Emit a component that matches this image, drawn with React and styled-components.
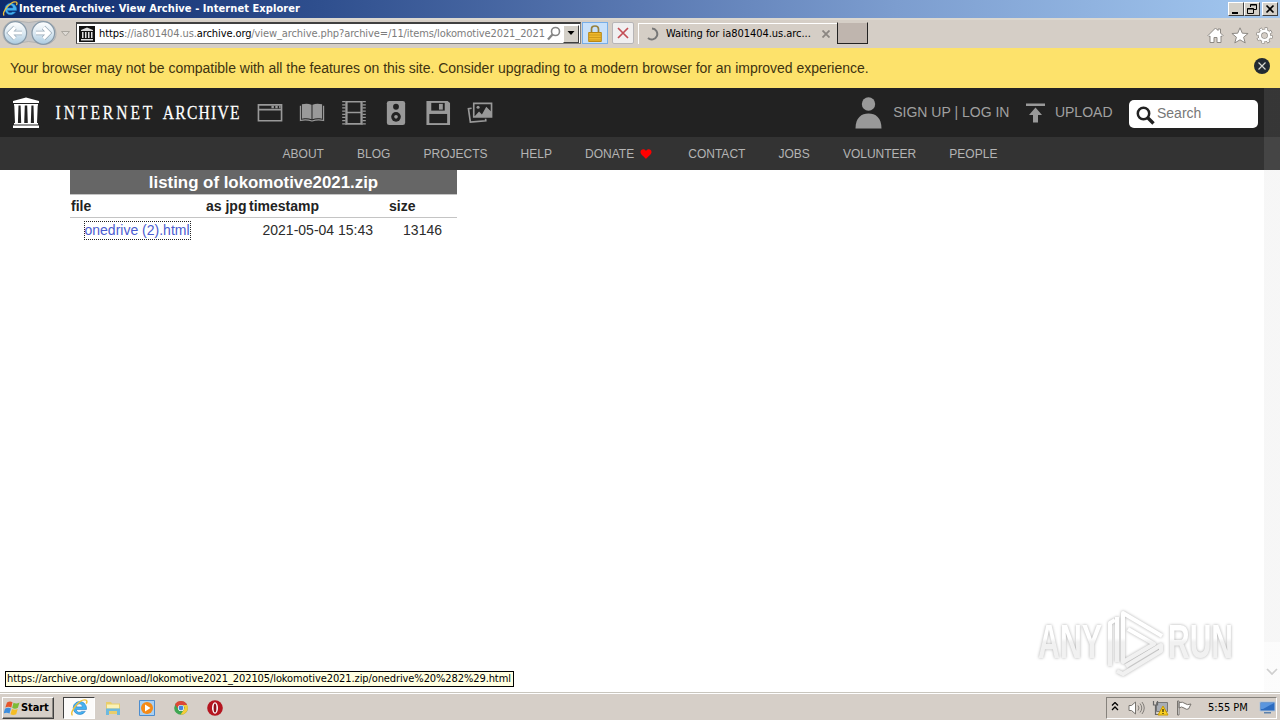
import React from "react";
import styled, { createGlobalStyle } from "styled-components";

const Global = createGlobalStyle`
  * { box-sizing: border-box; }
  body { margin: 0; background: #fff; overflow: hidden; }
  svg { display: block; flex: none; }
`;

const ui = `"DejaVu Sans Condensed", "DejaVu Sans", sans-serif`;

const Screen = styled.div`
  width: 1280px; height: 720px; position: relative; overflow: hidden;
  display: flex; flex-direction: column;
  font-family: "Liberation Sans", Arial, sans-serif; font-size: 14px; color: #2c2c2c;
`;
const TitleBar = styled.header`
  height: 18px; flex: none; display: flex; align-items: center; padding: 0 2px;
  background: linear-gradient(90deg, #0d2a6c 0%, #2f4f8e 25%, #5a79b2 50%, #7c9dcf 70%, #a3c8f0 100%);
`;
const WindowTitle = styled.span`
  flex: 1; margin-left: 1px; white-space: nowrap; color: #fff;
  font: bold 11px/18px ${ui}; letter-spacing: ${(p) => p.$track};
`;
const Caption = styled.button`
  width: 16px; height: 14px; padding: 0; margin: 0 0 0 ${(p) => p.$gap || 0}px;
  display: flex; align-items: center; justify-content: center;
  background: #d4d0c8; border: 1px solid; border-color: #fff #404040 #404040 #fff;
`;
const Toolbar = styled.div`
  height: 30px; flex: none; display: flex; align-items: flex-start;
  background: #d5cec6; border-top: 2px solid #dcd8d0; padding-left: 2px;
`;
const AddressBar = styled.div`
  width: 505px; height: 22px; margin: 2px 0 0; padding: 0 1px 0 2px;
  display: flex; align-items: center; background: #fff;
  border: 1px solid #808080; border-top: 2px solid #404040; border-left-color: #404040;
`;
const Url = styled.span`
  flex: 1; margin-left: 4px; white-space: nowrap; color: #7c7c7c;
  font: 11px/18px ${ui}; letter-spacing: ${(p) => p.$track};
  b { font-weight: normal; color: #000; }
`;
const DropButton = styled.div`
  width: 16px; height: 18px; display: flex; align-items: center; justify-content: center;
  background: #d4d0c8; border: 1px solid; border-color: #fff #404040 #404040 #fff; margin-left: 2px;
`;
const ToolButton = styled.div`
  width: ${(p) => p.$w}px; height: 22px; margin: 2px 0 0 ${(p) => p.$gap}px;
  display: flex; align-items: center; justify-content: center;
  background: ${(p) => p.$bg}; border: 1px solid ${(p) => p.$line}; border-radius: ${(p) => p.$r || 0}px;
`;
const Tab = styled.div`
  width: 199px; height: 21px; margin: 3px 0 0 4px; padding: 0 7px 0 6px;
  display: flex; align-items: center; border-top: 1px solid #fff; border-left: 1px solid #fff;
`;
const TabText = styled.span`
  flex: 1; margin-left: 7px; color: #000; white-space: nowrap;
  font: 11px/18px ${ui}; letter-spacing: ${(p) => p.$track};
`;
const NewTab = styled.div`
  width: 31px; height: 22px; margin-top: 2px; background: #bfb5ae;
  border: 1px solid #222; border-top-color: #d5cec6;
`;
const BrowserActions = styled.div`
  margin: 7px 7px 0 auto; display: flex; gap: 7px;
`;
const Notice = styled.div`
  height: 40px; flex: none; display: flex; align-items: center; justify-content: space-between;
  padding: 0 9px 0 10px; background: #fde26b; color: #3d3310; letter-spacing: -0.023px;
  svg { margin-bottom: 4px; }
`;
const SiteHeader = styled.div`
  height: 49px; flex: none; display: flex; align-items: center; background: #222; padding-left: 12px; color: #a0a0a0;
`;
const WordmarkArt = styled.svg`
  margin-left: 14px; overflow: visible;
  font-family: "Liberation Serif", serif; font-size: 19.5px; fill: #fff;
`;
const MediaIcons = styled.div`
  display: flex; gap: 16px; margin-left: 14.5px;
`;
const Account = styled.div`
  margin-left: auto; margin-right: 22px; display: flex; align-items: center;
`;
const HeaderText = styled.span`
  margin: 0 ${(p) => p.$right}px 2px ${(p) => p.$left}px; white-space: nowrap; line-height: 20px;
`;
const SearchBox = styled.div`
  width: 129px; height: 28px; display: flex; align-items: center; padding-left: 7px; margin-top: 3px;
  background: #fff; border-radius: 5px; color: #777; gap: 2px;
  svg { margin-top: 2px; }
  span { margin-bottom: 2px; }
`;
const Nav = styled.nav`
  height: 33px; flex: none; display: flex; justify-content: center; align-items: center; gap: 33.1px;
  background: #333; color: #b4b4b4; font-size: 12px;
`;
const NavItem = styled.a`
  display: flex; align-items: center; gap: 6px; white-space: nowrap; line-height: 18px;
`;
const Heart = styled.svg`
  margin-right: 3px; fill: red;
`;
const Content = styled.main`
  flex: 1; padding-left: 70px; background: #fff;
`;
const Listing = styled.table`
  width: 387px; border-collapse: collapse; table-layout: fixed; line-height: 20px;
  caption { height: 24px; line-height: 25px; background: #666; color: #fff; font-size: 16.85px; font-weight: bold; }
`;
const Th = styled.th`
  width: ${(p) => p.$w}px; height: 23px; padding: 0 1px; line-height: 19px; text-align: left; white-space: nowrap; color: #222;
  border-bottom: 1px solid #c4c4c4; border-top: 1px solid #c4c4c4;
`;
const Td = styled.td`
  height: 25px; padding: 0 15px 0 14.5px; white-space: nowrap; text-align: ${(p) => p.$align || "left"};
`;
const FileLink = styled.a`
  color: #4b5cd0; outline: 1px dotted #222; line-height: 17px; display: inline-block;
`;
const Scrollbar = styled.div`
  position: absolute; right: 0; top: 88px; width: 16px; height: 604px;
  background: linear-gradient(rgba(190,190,190,.13) 554px, rgba(190,190,190,.05) 554px);
  display: flex; align-items: flex-end; justify-content: center; padding-bottom: 16px;
`;
const StatusTip = styled.div`
  position: absolute; left: 5px; top: 671px; width: 509px; height: 16px; padding-left: 1px;
  background: #ffffe1; border: 1px solid #000; color: #000; white-space: nowrap;
  font: 11px/14px ${ui}; letter-spacing: ${(p) => p.$track};
`;
const Watermark = styled.svg`
  position: absolute; left: 1030px; top: 602px; overflow: visible;
  filter: drop-shadow(0 0 1.8px rgba(0,0,0,.32));
`;
const Taskbar = styled.footer`
  height: 28px; flex: none; display: flex; align-items: center; padding: 2px 3px 0 2px;
  background: #d6cfc8; border-top: 1px solid #c9c6be; box-shadow: inset 0 1px #fff;
`;
const StartButton = styled.div`
  width: 52px; height: 22px; display: flex; align-items: center; padding-left: 1px;
  border: 1px solid; border-color: #fff #404040 #404040 #fff; box-shadow: inset -1px -1px #8c8984;
  font: bold 11px/18px ${ui}; letter-spacing: ${(p) => p.$track}; color: #000;
`;
const TaskSlot = styled.div`
  width: ${(p) => (p.$active ? 32 : 34)}px; height: 22px; display: flex; align-items: center; justify-content: center;
  ${(p) => p.$active && `margin: 0 1px 0 9px; background: #fcfbfa; border: 1px solid; border-color: #404040 #fff #fff #404040;`}
`;
const Tray = styled.div`
  margin-left: auto; width: 171px; height: 22px; display: flex; align-items: center; gap: 7px; padding: 0 0 0 4px;
  border: 1px solid; border-color: #86827c #fff #fff #86827c; color: #000;
`;
const Clock = styled.span`
  margin: 0 4px 0 8px; white-space: nowrap; font: 11px/18px ${ui}; letter-spacing: ${(p) => p.$track};
`;

const IeLogo = ({ size }) => (
  <svg width={size} height={size} viewBox="0 0 16 16" fill="none">
    <path d="M14 5.700A5.800 5.800 0 1 0 13.600 11H10.300A2.900 2.900 0 0 1 5.400 9.400H14.600C14.800 7.800 14.600 6.700 14 5.700ZM5.600 7A2.600 2.600 0 0 1 11 7Z" fill="#45b2f0" stroke="#1c78c4" strokeWidth=".5" />
    <path d="M2.200 14.500C-1.200 12 9-.8 14.200 1c1.200.5.900 2 .2 3.200" stroke="#f0c13b" strokeWidth="1.300" />
  </svg>
);
const Temple = ({ w, h }) => (
  <svg width={w} height={h} viewBox="0 0 28 31" fill="#fff">
    <path d="M1 4 14 .5 27 4v2H1zM2 7h24v1.500H2zM2.300 8.500h4.200l-.6 18H3zM8.600 8.500h4.200l-.6 18H9.200zM15.200 8.500h4.200l-.6 18h-3zM21.500 8.500h4.200l-.7 18h-3zM2 26h24v1.500H2zM1 28.500h26V31H1z" />
  </svg>
);
const NavArrows = () => (
  <svg width="74" height="28" viewBox="0 0 74 28">
    <defs>
      <linearGradient id="orb" x2="0" y2="1"><stop stopColor="#fff" /><stop offset=".5" stopColor="#dce9f2" /><stop offset="1" stopColor="#abcbe0" /></linearGradient>
    </defs>
    <path d="M1 13C1 2 12-1 19 1.500q8 2 15 0c8-2 20 1 20 12S42 26 34 22.500q-8-2-14 0C10 27 1 23 1 13Z" fill="#c5c6c8" stroke="#b2b2b2" />
    {[13.3, 41.3].map((x) => <circle key={x} cx={x} cy="13" r="11.300" fill="url(#orb)" stroke="#8799a8" strokeWidth="1.200" />)}
    <path d="M20 13H8M13 7.500 7.500 13l5.500 5.500M34 13h12M41.500 7.500 47 13l-5.500 5.500" fill="none" stroke="#9aabb8" strokeWidth="4.600" />
    <path d="M20 13H8M13 7.500 7.500 13l5.500 5.500M34 13h12M41.500 7.500 47 13l-5.500 5.500" fill="none" stroke="#fff" strokeWidth="3.200" />
    <path d="M59.500 11.500h8l-4 4.500z" fill="#dedad5" stroke="#aaa69f" />
  </svg>
);
const Wordmark = () => (
  <WordmarkArt width="188" height="24" viewBox="0 0 188 24">
    <g transform="scale(.8 1)" stroke="#fff" strokeWidth=".25">
      <text x="2" y="18" textLength="121">INTERNET</text>
      <text x="136" y="18" textLength="96">ARCHIVE</text>
    </g>
  </WordmarkArt>
);

const media = [
  <g key="web" fill="none" stroke="#999" strokeWidth="1.700"><path d="M1.500 5h24v16.500h-24zM1.500 10h24" /><path d="M15 7.300h2.500M19 7.300h2.500M23 7.300h1.500" strokeWidth="2.500" /></g>,
  <g key="book"><path d="M3 4.500c4-1 7-.8 10 .5v15c-3-1.200-6-1.200-10-.5zM24 4.500c-4-1-7-.8-10 .5v15c3-1.200 6-1.200 10-.5z" fill="#999" /><path d="M1.500 6v15.300c4-1 8-.8 12 .5 4-1.300 8-1.500 12-.5V6" fill="none" stroke="#999" strokeWidth="1.300" /></g>,
  <g key="film" fill="none" stroke="#999"><path d="M6 1.800h15v23H6zM6 13h15" strokeWidth="1.700" /><path d="M3 1v25M24 1v25" strokeWidth="3.500" strokeDasharray="1.300 2" /><path d="M5 1v25M22 1v25" /></g>,
  <g key="audio"><rect x="4" y="1" width="19" height="25" rx="2.500" fill="#999" /><circle cx="13.500" cy="7" r="3" fill="#222" /><circle cx="13.500" cy="17.500" r="5" fill="#222" /><circle cx="13.500" cy="17.500" r="1.900" fill="#999" /></g>,
  <g key="disk"><path d="M1.500 1h22l2.500 2v23H1.500z" fill="#999" /><path d="M6.500 3h14v8h-14z" fill="#222" /><path d="M14.500 4h4v6h-4z" fill="#999" /><path d="M4.500 14.500h18.500V24H4.500z" fill="#222" /></g>,
  <g key="image" fill="none" stroke="#999" strokeWidth="1.700"><path d="M7 3.500h18.500v14H7z" /><path d="M4.800 8.500 1.500 9l2 14L19.500 21.500l-.2-2" /><circle cx="11.500" cy="7.500" r="1.600" fill="#999" stroke="none" /><path d="m8 17 4.500-5 3 3 4.500-8L25 12v5z" fill="#999" stroke="none" /></g>,
];
const navItems = ["ABOUT", "BLOG", "PROJECTS", "HELP", "DONATE", "CONTACT", "JOBS", "VOLUNTEER", "PEOPLE"];

const Header = () => (
  <SiteHeader>
    <Temple w={28} h={31} />
    <Wordmark />
    <MediaIcons>
      {media.map((art) => <svg key={art.key} width="26" height="26" viewBox="0 0 27 27">{art}</svg>)}
    </MediaIcons>
    <Account>
      <svg width="28" height="32" viewBox="0 0 28 32" fill="#999"><circle cx="14.500" cy="7" r="6.700" /><path d="M1.500 31.500C1.500 20.500 7.500 16.500 14.500 16.500S27.500 20.500 27.500 31.500z" /></svg>
      <HeaderText $left={11} $right={15.5}>SIGN UP | LOG IN</HeaderText>
      <svg width="21" height="20" viewBox="0 0 21 20" fill="#999"><path d="M1 .500h19v2.500H1zM10.500 4.500l6.500 7.500h-4v7.500H8V12H4z" /></svg>
      <HeaderText $left={9} $right={16.5}>UPLOAD</HeaderText>
      <SearchBox>
        <svg width="19" height="19" viewBox="0 0 19 19" fill="none" stroke="#222"><circle cx="7.500" cy="7.500" r="5.700" strokeWidth="2.500" /><path d="m11.500 11.500 6 6" strokeWidth="3.300" /></svg>
        <span>Search</span>
      </SearchBox>
    </Account>
  </SiteHeader>
);

export default function App() {
  return (
    <Screen>
      <Global />
      <TitleBar>
        <IeLogo size={16} />
        <WindowTitle $track="0.07px">Internet Archive: View Archive - Internet Explorer</WindowTitle>
        <Caption><svg width="10" height="10"><path d="M1 8h6v2H1z" /></svg></Caption>
        <Caption><svg width="10" height="10" fill="none" stroke="#000"><path d="M3.500 3V.500h6v5H7M3.500 1h6M.500 4.500h6v5h-6zM.500 5h6" /></svg></Caption>
        <Caption $gap={2}><svg width="10" height="10" stroke="#000" strokeWidth="1.700"><path d="m1.500 1.500 7 7m0-7-7 7" /></svg></Caption>
      </TitleBar>
      <Toolbar>
        <NavArrows />
        <AddressBar>
          <svg width="16" height="16" viewBox="0 0 16 16"><path d="M0 0h16v16H0z" fill="#111" /><path d="M2 4 8 1.500 14 4v1H2zM3 6h1.500v6H3zM6 6h1.500v6H6zM9 6h1.500v6H9zM12 6h1.500v6H12zM2 13h12v1.500H2z" fill="#ddd" /></svg>
          <Url $track="-0.1px"><b>https</b>://ia801404.us.<b>archive.org</b>/view_archive.php?archive=/11/items/lokomotive2021_2021</Url>
          <svg width="14" height="15" viewBox="0 0 14 15" fill="none" stroke="#858585"><circle cx="8.500" cy="5.500" r="4" strokeWidth="1.600" /><path d="M5.500 8.500 1 13.500" strokeWidth="2.300" /></svg>
          <DropButton><svg width="8" height="5"><path d="M.500 0h7L4 4z" /></svg></DropButton>
        </AddressBar>
        <ToolButton $w={26} $gap={1} $bg="#c8e0fa" $line="#78aee8">
          <svg width="14" height="17" viewBox="0 0 14 17"><path d="M3.500 8V4q0-3 3.500-3t3.500 3v4" fill="none" stroke="#97813d" strokeWidth="1.700" /><path d="M.700 7.500h12.600v9H.700z" fill="#eeb82c" stroke="#b88613" /><path d="M1 10h12M1 12.500h12M1 15h12" stroke="#d09b1c" /></svg>
        </ToolButton>
        <ToolButton $w={22} $gap={4} $bg="#f0eff0" $line="#b7b5b7" $r={2}>
          <svg width="12" height="12" stroke="#c34d55" strokeWidth="1.700"><path d="m1 1 10 10M11 1 1 11" /></svg>
        </ToolButton>
        <Tab>
          <svg width="14" height="14" fill="none" stroke="#777" strokeWidth="2"><path d="M7 1.500a5.500 5.500 0 1 1-4 9.500" /></svg>
          <TabText $track="-0.04px">Waiting for ia801404.us.arc...</TabText>
          <svg width="8" height="8" stroke="#8b8681" strokeWidth="1.800"><path d="m.500.500 7 7m0-7-7 7" /></svg>
        </Tab>
        <NewTab />
        <BrowserActions>
          <svg width="17" height="17" viewBox="0 0 17 17" fill="#fff" stroke="#8c8883"><path d="M1 8.500 8.500 1l2.500 2.500V2h2.500v4L16 8.500l-1 1-1-.5v6.500H10v-5H7v5H3V9l-1 .5z" /></svg>
          <svg width="18" height="17" viewBox="0 0 18 17" fill="#fff" stroke="#8c8883"><path d="m9 .800 2.300 5.400 5.800.3-4.500 3.700 1.600 5.700L9 12.800l-5.200 3.100 1.600-5.700L.900 6.500l5.800-.3z" /></svg>
          <svg width="17" height="17" viewBox="0 0 17 17"><g fill="none"><circle cx="8.500" cy="8.500" r="6.900" stroke="#8c8883" strokeWidth="3" strokeDasharray="3 2.420" /><circle cx="8.500" cy="8.500" r="4.600" stroke="#8c8883" strokeWidth="4" /><circle cx="8.500" cy="8.500" r="4.600" stroke="#fff" strokeWidth="2.600" /><circle cx="8.500" cy="8.500" r="6.700" stroke="#fff" strokeWidth="2" strokeDasharray="2 3.260" strokeDashoffset="-.5" /></g></svg>
        </BrowserActions>
      </Toolbar>
      <Notice>
        <span>Your browser may not be compatible with all the features on this site. Consider upgrading to a modern browser for an improved experience.</span>
        <svg width="18" height="18"><circle cx="9" cy="9" r="8" fill="#222a32" /><path d="m5.500 5.500 7 7m0-7-7 7" stroke="#d8d8d0" strokeWidth="1.200" /></svg>
      </Notice>
      <Header />
      <Nav>
        {navItems.map((n) => (
          <NavItem key={n}>{n}{n === "DONATE" && <Heart width="12" height="10" viewBox="0 0 12 10"><path d="M6 10C4 7.500.500 5.500.500 3 .500 0 4.500-.8 6 2c1.500-2.800 5.500-2 5.500 1C11.500 5.500 8 7.500 6 10Z" /></Heart>}</NavItem>
        ))}
      </Nav>
      <Content>
        <Listing>
          <caption>listing of lokomotive2021.zip</caption>
          <thead><tr><Th $w={135}>file</Th><Th $w={43}>as jpg</Th><Th $w={140}>timestamp</Th><Th $w={69}>size</Th></tr></thead>
          <tbody><tr><Td><FileLink>onedrive (2).html</FileLink></Td><Td /><Td>2021-05-04 15:43</Td><Td $align="right">13146</Td></tr></tbody>
        </Listing>
      </Content>
      <Taskbar>
        <StartButton $track="-0.1px">
          <svg width="17" height="16" viewBox="0 0 17 16"><path d="M3 2.500q3-2 5.500-.3L7.300 7.500q-3-1.500-6 0z" fill="#e6562b" /><path d="M9.500 2.800q3 1.500 6-.3l-1.600 5.300q-3 1.700-5.700 0z" fill="#7dbb36" /><path d="M1 8.700q3-1.600 6-.2l-1.500 5q-3-1.500-6 0z" fill="#3e8ede" /><path d="M8 9q3 1.600 5.700 0l-1.500 5.300q-3 1.500-5.700 0z" fill="#f5bd25" /></svg>
          Start
        </StartButton>
        <TaskSlot $active><IeLogo size={18} /></TaskSlot>
        <TaskSlot><svg width="16" height="16" viewBox="0 0 16 16"><path d="M1 2h5l1 1.500h8V14H1z" fill="#e8cd6b" /><path d="M2 4.500h12v4H2z" fill="#fbf2b6" /><path d="M1 8.500h14V15h-3v-4H4v4H1z" fill="#6db9df" /></svg></TaskSlot>
        <TaskSlot><svg width="16" height="16" viewBox="0 0 16 16"><path d="M.500.500h15v15H.500z" fill="#a9d0f2" stroke="#4d8dce" /><circle cx="8" cy="8" r="6" fill="#f58a16" /><path d="m6 4.500 5.500 3.500L6 11.500z" fill="#fff" /></svg></TaskSlot>
        <TaskSlot><svg width="14" height="14" viewBox="0 0 14 14"><circle cx="7" cy="7" r="6.800" fill="#3fa652" /><path d="M1 3.500A6.800 6.800 0 0 1 13.100 4H7a3 3 0 0 0-3 3.500z" fill="#dd4738" /><path d="M13.100 4A6.800 6.800 0 0 1 6.500 13.800L10 8.500A3 3 0 0 0 8.500 4z" fill="#f6cb39" /><circle cx="7" cy="7" r="3.100" fill="#fff" /><circle cx="7" cy="7" r="2.400" fill="#4584e0" /></svg></TaskSlot>
        <TaskSlot><svg width="16" height="16" viewBox="0 0 16 16"><circle cx="8" cy="8" r="7.800" fill="#b51620" /><ellipse cx="8" cy="8" rx="3" ry="5.800" fill="#fff" /><ellipse cx="8" cy="8" rx="1.400" ry="4.600" fill="#8f101a" /></svg></TaskSlot>
        <Tray>
          <svg width="10" height="11" fill="none" stroke="#000" strokeWidth="1.300"><path d="m1 3.500 3-3 3 3M1 8l3-3 3 3" /></svg>
          <svg width="17" height="16" viewBox="0 0 17 16" fill="none" stroke="#77736e"><path d="M1 5.500h2.500L7.500 2v12l-4-3.500H1z" fill="#fff" /><path d="M10 5.500q2 2.500 0 5M12 3.500q3.500 4.500 0 9M14 2q4.500 6 0 12" strokeWidth=".9" /></svg>
          <svg width="17" height="16" viewBox="0 0 17 16"><path d="M4.500 2.500h11v9h-11z" fill="#a8adb5" stroke="#777" /><path d="M1.500 1v4h4V1M3.500 5v9.500H8" fill="none" stroke="#666" strokeWidth="1.200" /><path d="m11 6 5 9H6z" fill="#f9cf22" stroke="#c99a00" /><path d="M10.500 9h1v3h-1zm0 4h1v1h-1z" /></svg>
          <svg width="17" height="16" viewBox="0 0 17 16" fill="#fff" stroke="#77736e"><path d="M1.500 1h1.500v14H1.500zM3 2.500q4-1 6 1t6 .5l-2.500 5q-2 1-4.500-1t-5 0z" /></svg>
          <Clock $track="0">5:55 PM</Clock>
          <svg width="17" height="15" viewBox="0 0 17 15"><path d="M1 2h15v9H1z" fill="#2d6cc0" stroke="#b0c5dc" /><path d="M2 3h13L4 9H2z" fill="#5b96de" /><path d="M5 12h7v1.500H5z" fill="#5c81ac" /></svg>
        </Tray>
      </Taskbar>
      <Scrollbar><svg width="12" height="8" fill="none" stroke="#cfcfcf" strokeWidth="1.700"><path d="m1 1 5 5 5-5" /></svg></Scrollbar>
      <StatusTip $track="-0.1px">https://archive.org/download/lokomotive2021_202105/lokomotive2021.zip/onedrive%20%282%29.html</StatusTip>
      <Watermark width="220" height="78" viewBox="0 0 220 78">
        <defs><linearGradient id="mark" gradientUnits="userSpaceOnUse" x1="0" y1="36" x2="0" y2="40"><stop stopColor="#fff" /><stop offset="1" stopColor="#f1f1f1" /></linearGradient></defs>
        <g fill="url(#mark)" fontWeight="bold" style={{ fontFamily: '"Liberation Sans Narrow", "Liberation Sans", sans-serif', fontSize: 48 }}>
          <text x="8" y="56" textLength="64" lengthAdjust="spacingAndGlyphs">ANY</text>
          <text x="138" y="56" textLength="65" lengthAdjust="spacingAndGlyphs">RUN</text>
        </g>
        <path d="M80 64V21l5-3M87 60V15M93 48V11l39 23M98 27l26 15-31 18V26M87 69l6 3 38-23v-6L96 64" fill="none" stroke="url(#mark)" strokeWidth="4" strokeLinejoin="round" />
      </Watermark>
    </Screen>
  );
}
